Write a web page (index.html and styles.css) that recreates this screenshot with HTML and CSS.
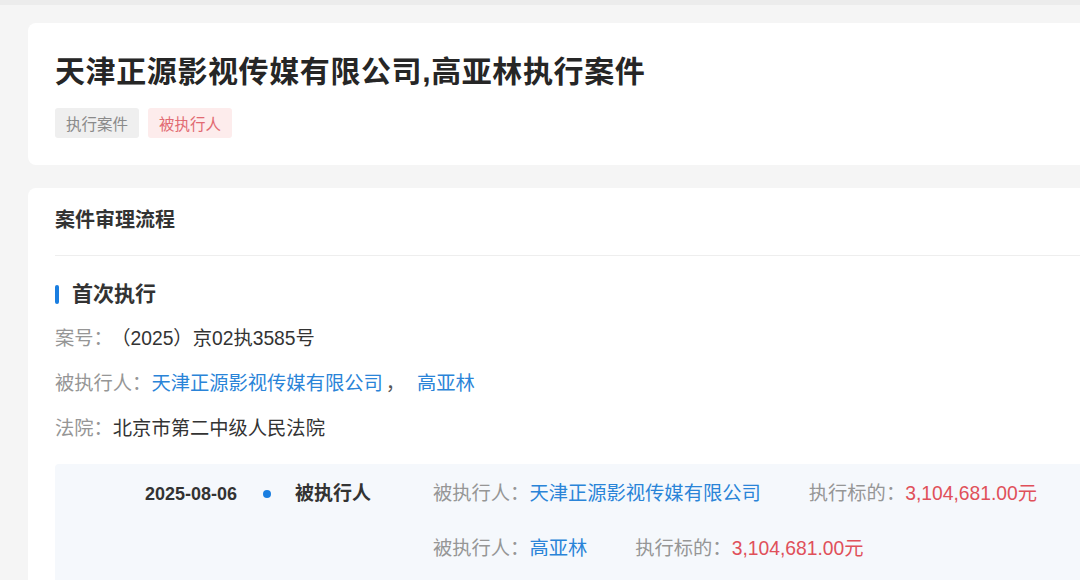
FILE: index.html
```html
<!DOCTYPE html>
<html lang="zh-CN">
<head>
<meta charset="utf-8">
<title>执行案件</title>
<link rel="stylesheet" href="styles.css">
</head>
<body>
<div class="topbar"></div>
<main class="page">
  <section class="card head-card">
    <h1 class="title">天津正源影视传媒有限公司,高亚林执行案件</h1>
    <div class="tags">
      <span class="tag tag-gray">执行案件</span>
      <span class="tag tag-red">被执行人</span>
    </div>
  </section>

  <section class="card flow-card">
    <h2 class="card-title">案件审理流程</h2>
    <div class="divider"></div>
    <h3 class="stage"><span class="bar"></span>首次执行</h3>
    <div class="info">
      <p class="info-line"><span class="lbl">案号：</span><span class="val case-no">（2025）京02执3585号</span></p>
      <p class="info-line"><span class="lbl">被执行人：</span><span class="link">天津正源影视传媒有限公司</span><span class="sep">，</span><span class="link">高亚林</span></p>
      <p class="info-line"><span class="lbl">法院：</span><span class="val">北京市第二中级人民法院</span></p>
    </div>
    <div class="timeline">
      <div class="event">
        <span class="date">2025-08-06</span>
        <span class="dot"></span>
        <span class="role">被执行人</span>
        <div class="details">
          <div class="detail-row">
            <span class="pair"><span class="lbl">被执行人：</span><span class="link">天津正源影视传媒有限公司</span></span>
            <span class="pair"><span class="lbl">执行标的：</span><span class="money">3,104,681.00元</span></span>
          </div>
          <div class="detail-row">
            <span class="pair"><span class="lbl">被执行人：</span><span class="link">高亚林</span></span>
            <span class="pair"><span class="lbl">执行标的：</span><span class="money">3,104,681.00元</span></span>
          </div>
        </div>
      </div>
    </div>
  </section>
</main>
</body>
</html>
```

FILE: styles.css
```css
* { box-sizing: border-box; }

html, body {
  margin: 0;
  padding: 0;
  height: 100%;
  overflow: hidden;
}

body {
  background: #f5f5f5;
  font-family: "Liberation Sans", "Noto Sans CJK SC", sans-serif;
  color: #333;
}

.topbar {
  height: 5px;
  background: #ececec;
}

.page {
  padding: 18px 0 0 28px;
  display: flex;
  flex-direction: column;
  gap: 23px;
  margin-right: -30px;
}

.card {
  background: #fff;
  border-radius: 8px;
  padding-left: 27px;
}

.head-card {
  padding-top: 29px;
  padding-bottom: 27px;
}

.title {
  margin: 0;
  font-size: 30px;
  line-height: 40px;
  font-weight: 700;
  color: #262626;
  letter-spacing: 0.6px;
}

.tags {
  display: flex;
  gap: 9px;
  margin-top: 16px;
}

.tag {
  display: inline-flex;
  align-items: center;
  height: 30px;
  padding: 0 11px;
  font-size: 15.5px;
  border-radius: 3px;
}

.tag-gray {
  background: #efefef;
  color: #8a8a8a;
}

.tag-red {
  background: #fdecec;
  color: #e26a72;
}

.flow-card {
  padding-top: 18px;
  padding-bottom: 40px;
}

.card-title {
  margin: 0;
  font-size: 20px;
  line-height: 28px;
  font-weight: 700;
  color: #333;
}

.divider {
  height: 1px;
  background: #eeeeee;
  margin-top: 21px;
}

.stage {
  display: flex;
  align-items: center;
  margin: 23px 0 0;
  font-size: 21px;
  line-height: 30px;
  font-weight: 700;
  color: #333;
}

.bar {
  width: 4px;
  height: 19px;
  background: #1a7ee0;
  border-radius: 2px;
  margin-right: 13px;
}

.info {
  margin-top: 7px;
}

.info-line {
  margin: 0;
  font-size: 19.3px;
  line-height: 45px;
}

.lbl {
  color: #969696;
}

.val {
  color: #333;
}

.case-no {
  margin-left: 8px;
}

.link {
  color: #2a84d8;
}

.sep {
  color: #555;
  margin: 0 12px 0 3px;
}

.money {
  color: #e0505a;
}

.timeline {
  margin-top: 13px;
  background: #f5f8fc;
  padding: 16px 0 18px 90px;
  border-radius: 4px 0 0 0;
}

.event {
  display: flex;
  align-items: flex-start;
}

.date {
  font-size: 18px;
  line-height: 28px;
  font-weight: 700;
  color: #333;
  width: 118px;
}

.dot {
  width: 8px;
  height: 8px;
  border-radius: 50%;
  background: #1a7ee0;
  margin-top: 10px;
  margin-right: 24px;
}

.role {
  font-size: 19px;
  line-height: 28px;
  font-weight: 700;
  color: #333;
  width: 138px;
}

.details {
  display: flex;
  flex-direction: column;
  gap: 27px;
}

.detail-row {
  display: flex;
  gap: 48px;
  font-size: 19.3px;
  line-height: 28px;
}
```
